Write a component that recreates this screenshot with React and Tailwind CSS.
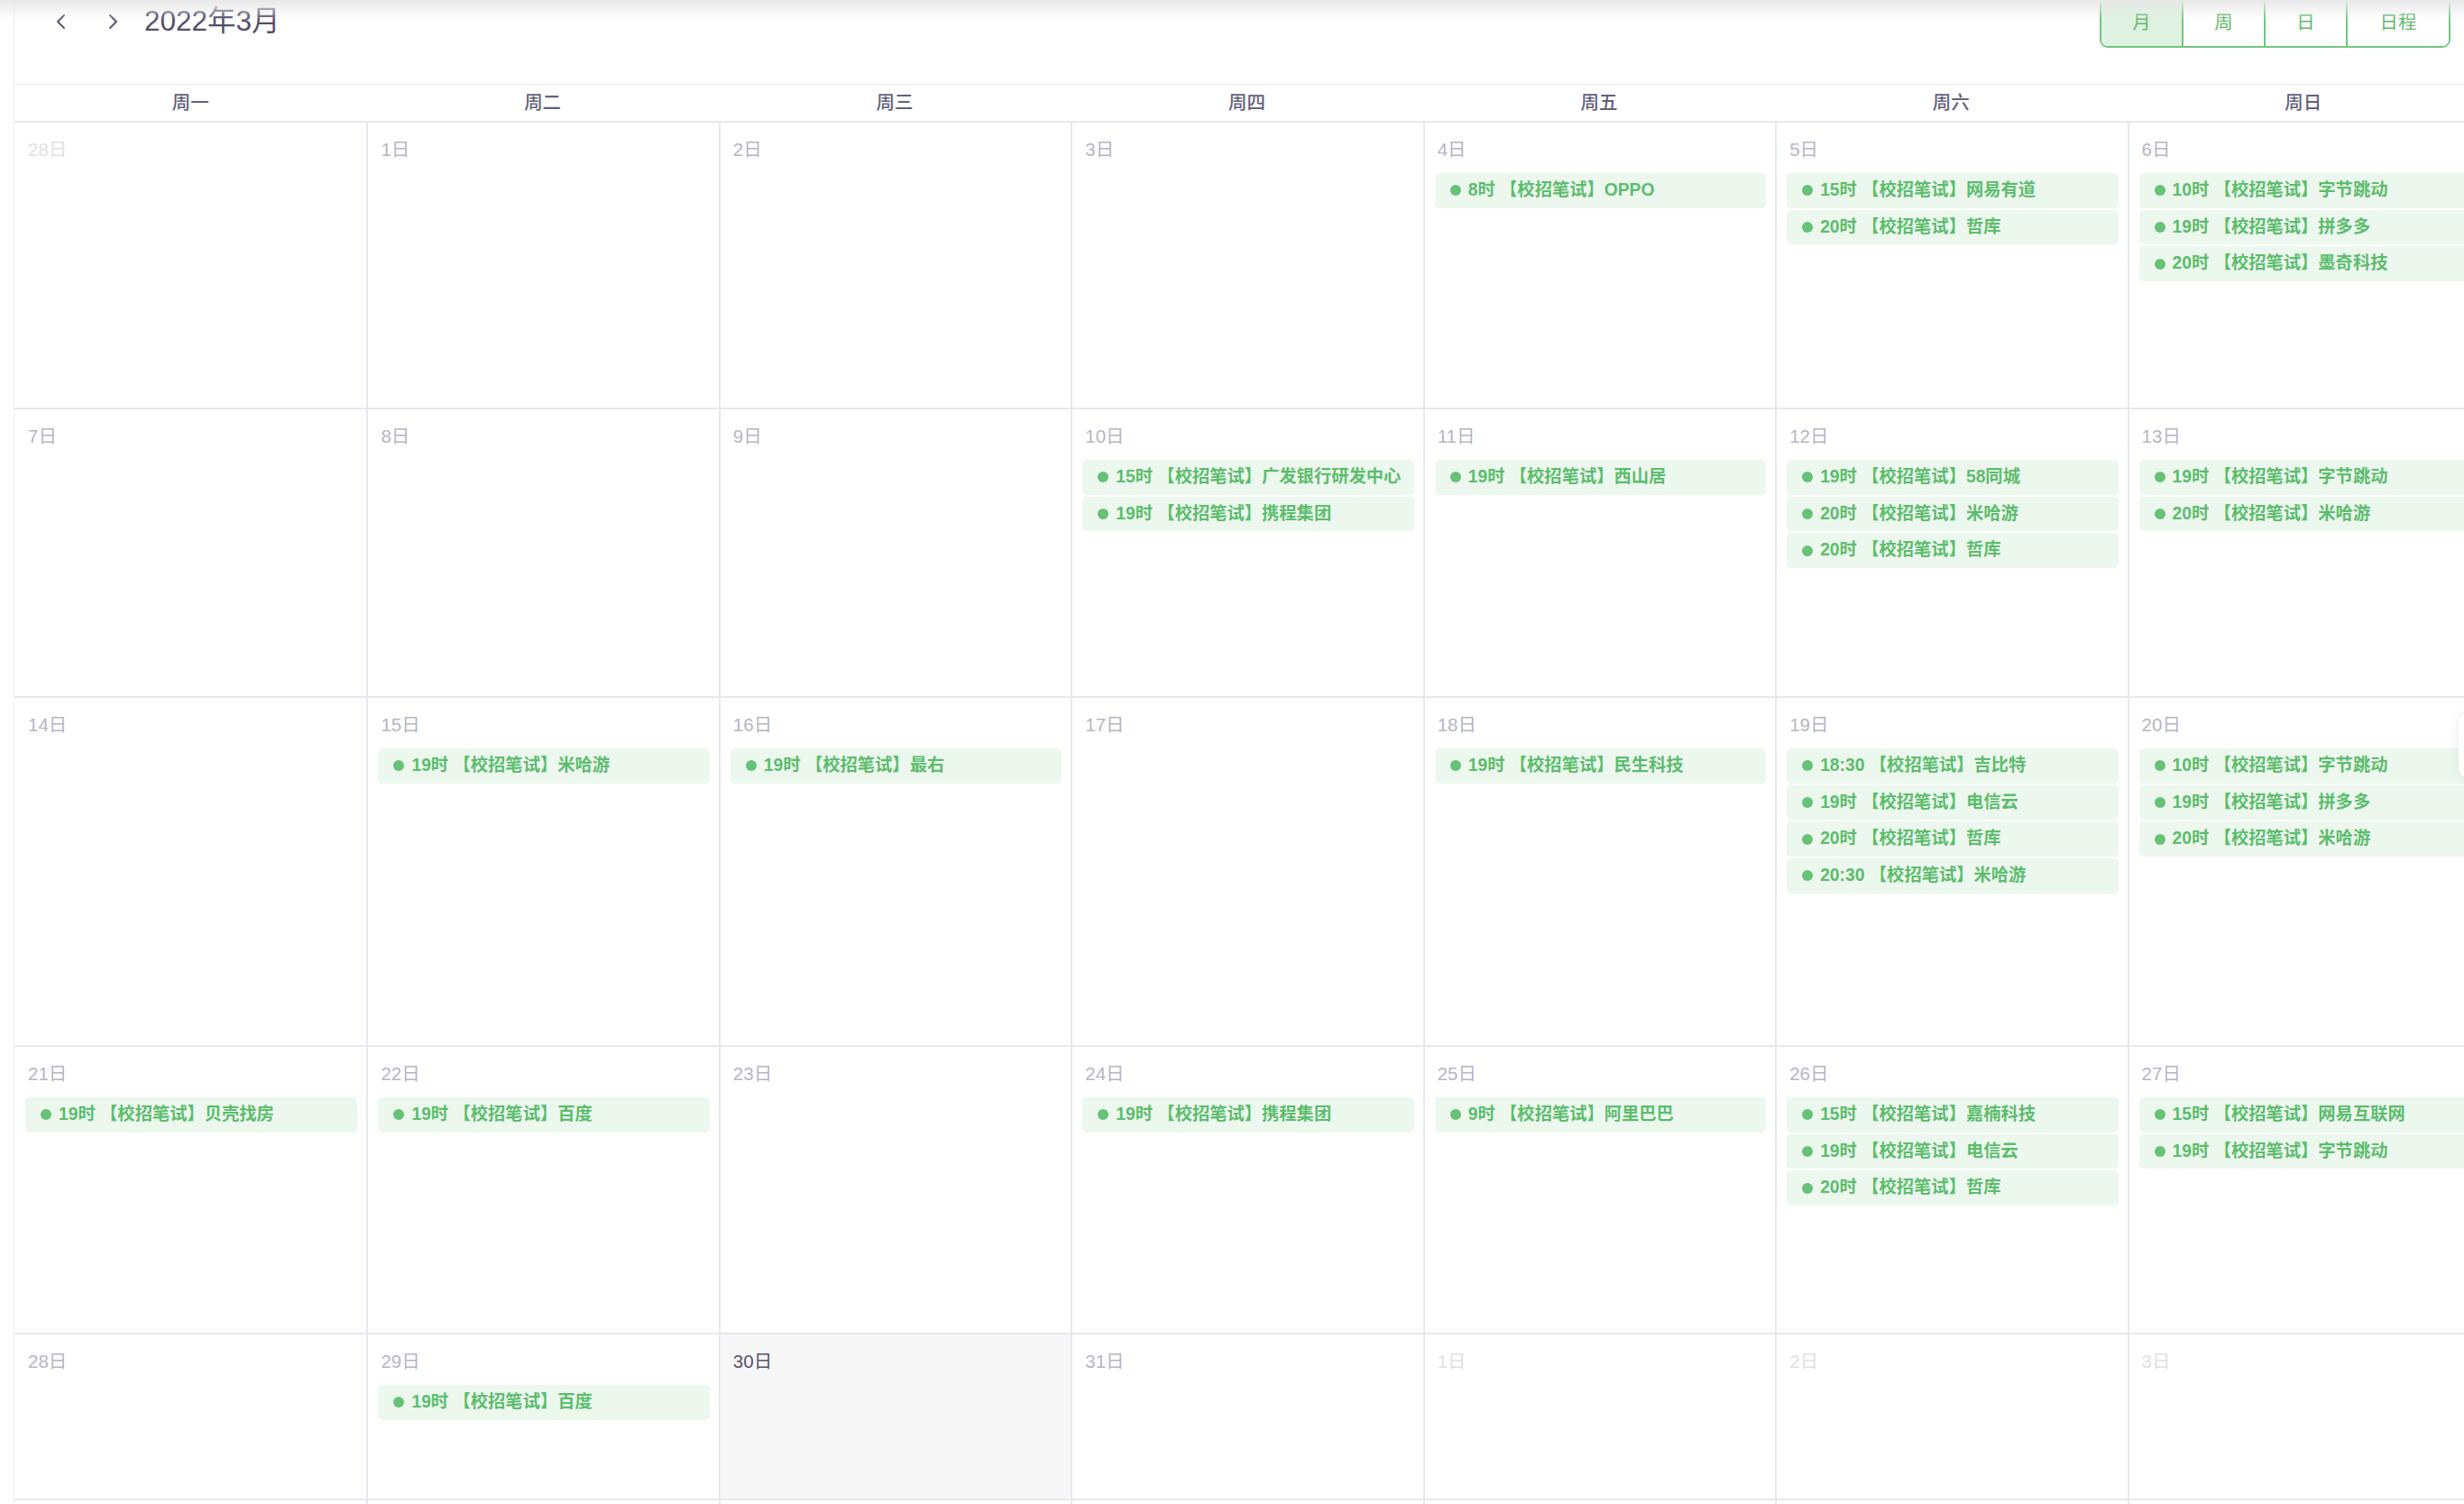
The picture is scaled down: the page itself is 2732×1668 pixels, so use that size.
import { useState } from 'react';

const WEEKDAYS = ['周一', '周二', '周三', '周四', '周五', '周六', '周日'];
const VIEWS = ['月', '周', '日', '日程'];

// 每行的高度（含上边框）
const ROW_HEIGHTS = ['h-[318px]', 'h-[320px]', 'h-[387px]', 'h-[319px]', 'h-[184px]', 'h-[318px]'];

const e = (time, name) => ({ time, name });

const WEEKS = [
  [
    { d: 28, out: true },
    { d: 1 },
    { d: 2 },
    { d: 3 },
    { d: 4, events: [e('8时', 'OPPO')] },
    { d: 5, events: [e('15时', '网易有道'), e('20时', '哲库')] },
    { d: 6, events: [e('10时', '字节跳动'), e('19时', '拼多多'), e('20时', '墨奇科技')] },
  ],
  [
    { d: 7 },
    { d: 8 },
    { d: 9 },
    { d: 10, events: [e('15时', '广发银行研发中心'), e('19时', '携程集团')] },
    { d: 11, events: [e('19时', '西山居')] },
    { d: 12, events: [e('19时', '58同城'), e('20时', '米哈游'), e('20时', '哲库')] },
    { d: 13, events: [e('19时', '字节跳动'), e('20时', '米哈游')] },
  ],
  [
    { d: 14 },
    { d: 15, events: [e('19时', '米哈游')] },
    { d: 16, events: [e('19时', '最右')] },
    { d: 17 },
    { d: 18, events: [e('19时', '民生科技')] },
    { d: 19, events: [e('18:30', '吉比特'), e('19时', '电信云'), e('20时', '哲库'), e('20:30', '米哈游')] },
    { d: 20, events: [e('10时', '字节跳动'), e('19时', '拼多多'), e('20时', '米哈游')] },
  ],
  [
    { d: 21, events: [e('19时', '贝壳找房')] },
    { d: 22, events: [e('19时', '百度')] },
    { d: 23 },
    { d: 24, events: [e('19时', '携程集团')] },
    { d: 25, events: [e('9时', '阿里巴巴')] },
    { d: 26, events: [e('15时', '嘉楠科技'), e('19时', '电信云'), e('20时', '哲库')] },
    { d: 27, events: [e('15时', '网易互联网'), e('19时', '字节跳动')] },
  ],
  [
    { d: 28 },
    { d: 29, events: [e('19时', '百度')] },
    { d: 30, today: true },
    { d: 31 },
    { d: 1, out: true },
    { d: 2, out: true },
    { d: 3, out: true },
  ],
  // 第六周在视口外，只露出分隔线
  [{}, {}, {}, {}, {}, {}, {}],
];

function Chevron({ dir }) {
  return (
    <svg width="16" height="20" viewBox="0 0 16 20" fill="none">
      <polyline
        points={dir === 'left' ? '11,3 4,10 11,17' : '5,3 12,10 5,17'}
        stroke="#5b5670"
        strokeWidth="2"
        strokeLinecap="round"
        strokeLinejoin="round"
      />
    </svg>
  );
}

function EventChip({ time, name }) {
  return (
    <div className="h-[38.7px] rounded-[5px] bg-[#ecf7ee] flex items-center pl-[17px] overflow-hidden">
      <span className="w-[12px] h-[12px] rounded-full bg-[#66c276] shrink-0" />
      <span className="ml-[8px] text-[19.3px] font-bold text-[#5cbd6d] whitespace-nowrap">
        {time} 【校招笔试】{name}
      </span>
    </div>
  );
}

function DayCell({ day, first }) {
  const labelColor = day.out
    ? 'text-[#e0e0e7]'
    : day.today
    ? 'text-[#57526e]'
    : 'text-[#b7b5c5]';

  return (
    <div
      className={
        (first ? 'pl-[12px]' : 'border-l-2 border-[#e8e7ef] pl-[11px]') +
        ' pr-[10px] pt-[15px] ' +
        (day.today ? 'bg-[#f7f7f8]' : 'bg-white')
      }
    >
      {day.d && (
        <div className={'pl-[3px] leading-[30px] text-[20.5px] ' + labelColor}>{day.d}日</div>
      )}
      <div className="mt-[11px] flex flex-col gap-[2px]">
        {(day.events || []).map((ev, i) => (
          <EventChip key={i} {...ev} />
        ))}
      </div>
    </div>
  );
}

export default function App() {
  const [view, setView] = useState('月');

  return (
    <div className="relative w-full h-screen overflow-hidden bg-white font-['Liberation_Sans','Noto_Sans_CJK_SC',sans-serif]">
      <div className="ml-[15px] w-[2734px] border-l border-[#ecebf1]">
        {/* 工具栏 */}
        <div className="h-[93px] flex justify-between items-start pr-[32px]">
          <div className="flex items-center h-[48px] pl-[44px]">
            <button className="w-[16px] h-[20px] flex items-center justify-center">
              <Chevron dir="left" />
            </button>
            <button className="ml-[41px] w-[16px] h-[20px] flex items-center justify-center">
              <Chevron dir="right" />
            </button>
            <h2 className="ml-[27px] text-[31.5px] text-[#534e6b] leading-none">2022年3月</h2>
          </div>
          <div className="-mt-[2px] flex h-[55px] border-2 border-[#72c77f] rounded-b-[9px] overflow-hidden">
            {VIEWS.map((v, i) => (
              <button
                key={v}
                onClick={() => setView(v)}
                className={
                  'h-full flex items-center justify-center text-[20.4px] text-[#5cba6b] ' +
                  (i === 3 ? 'w-[112px]' : 'w-[91px] border-r-2 border-[#72c77f]') +
                  (view === v ? ' bg-[#dff1e1]' : ' bg-white')
                }
              >
                {v}
              </button>
            ))}
          </div>
        </div>

        {/* 星期表头 */}
        <div className="grid grid-cols-7 h-[41px] border-t border-[#ebeaf1]">
          {WEEKDAYS.map(w => (
            <div key={w} className="flex items-center justify-center text-[20.5px] font-medium text-[#64617a]">
              {w}
            </div>
          ))}
        </div>

        {/* 日期网格 */}
        {WEEKS.map((week, r) => (
          <div key={r} className={'grid grid-cols-7 border-t-2 border-[#e8e7ef] ' + ROW_HEIGHTS[r]}>
            {week.map((day, c) => (
              <DayCell key={c} day={day} first={c === 0} />
            ))}
          </div>
        ))}
      </div>

      {/* 顶部阴影 */}
      <div className="absolute top-0 left-0 right-0 h-[22px] bg-linear-to-b from-[#e8e8e8] to-transparent pointer-events-none" />

      {/* 右侧浮动按钮（被裁切） */}
      <div className="absolute right-[-40px] top-[792px] w-[46px] h-[70px] rounded-[10px] bg-white shadow-[0_0_14px_rgba(0,0,0,0.08)]" />
    </div>
  );
}
